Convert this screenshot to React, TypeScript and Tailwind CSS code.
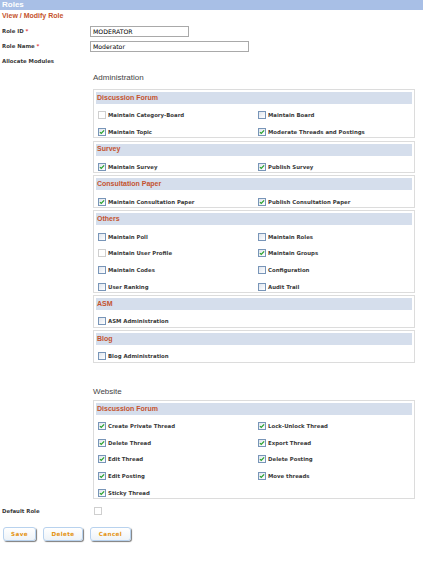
import React from 'react';

type CheckState = 'on' | 'off' | 'dis';

interface Group {
    title: string;
    items: [string, CheckState][];
}

const adminGroups: Group[] = [
    {
        title: 'Discussion Forum',
        items: [
            ['Maintain Category-Board', 'dis'],
            ['Maintain Board', 'off'],
            ['Maintain Topic', 'on'],
            ['Moderate Threads and Postings', 'on'],
        ],
    },
    {
        title: 'Survey',
        items: [
            ['Maintain Survey', 'on'],
            ['Publish Survey', 'on'],
        ],
    },
    {
        title: 'Consultation Paper',
        items: [
            ['Maintain Consultation Paper', 'on'],
            ['Publish Consultation Paper', 'on'],
        ],
    },
    {
        title: 'Others',
        items: [
            ['Maintain Poll', 'off'],
            ['Maintain Roles', 'off'],
            ['Maintain User Profile', 'dis'],
            ['Maintain Groups', 'on'],
            ['Maintain Codes', 'off'],
            ['Configuration', 'off'],
            ['User Ranking', 'off'],
            ['Audit Trail', 'off'],
        ],
    },
    { title: 'ASM', items: [['ASM Administration', 'off']] },
    { title: 'Blog', items: [['Blog Administration', 'off']] },
];

const websiteGroups: Group[] = [
    {
        title: 'Discussion Forum',
        items: [
            ['Create Private Thread', 'on'],
            ['Lock-Unlock Thread', 'on'],
            ['Delete Thread', 'on'],
            ['Export Thread', 'on'],
            ['Edit Thread', 'on'],
            ['Delete Posting', 'on'],
            ['Edit Posting', 'on'],
            ['Move threads', 'on'],
            ['Sticky Thread', 'on'],
        ],
    },
];

function Check({ state }: { state: CheckState }) {
    if (state === 'dis') {
        return <span className="block w-[8px] h-[8px] shrink-0 border border-[#cfcfcf] bg-white" />;
    }
    return (
        <span className="relative block w-[8px] h-[8px] shrink-0 border border-[#7895b8] bg-gradient-to-br from-[#dfe5ee] to-white">
            {state === 'on' && (
                <svg viewBox="0 0 8 8" className="absolute left-0 top-0 w-[6px] h-[6px]">
                    <path d="M1.2 4.2 L3 6 L6.8 1.8" fill="none" stroke="#27a22b" strokeWidth="1.6" />
                </svg>
            )}
        </span>
    );
}

function ModuleBox({ group }: { group: Group }) {
    return (
        <div className="w-[322px] border border-[#dcdcdc] p-[2px] pb-0 mt-[2.2px]">
            <div className="h-[12px] bg-[#d5deec] pl-[1px] flex items-center font-['Liberation_Sans'] font-bold text-[7px] text-[#c4532f]">
                {group.title}
            </div>
            <div className="grid grid-cols-[160px_1fr]">
                {group.items.map(([label, state]) => (
                    <div key={label} className="h-[16.7px] flex items-end pb-[1.5px] pl-[2px]">
                        <Check state={state} />
                        <span className="ml-[2px] font-['DejaVu_Sans'] font-bold text-[5.4px] leading-[8px] text-[#3a3a3a] whitespace-nowrap">
                            {label}
                        </span>
                    </div>
                ))}
            </div>
        </div>
    );
}

function FormRow({ label, required, children }: { label: string; required?: boolean; children: React.ReactNode }) {
    return (
        <div className="flex items-center">
            <div className="w-[90px] shrink-0 pl-[2px] font-['DejaVu_Sans'] font-bold text-[5.4px] text-[#3a3a3a]">
                {label}
                {required && <span className="text-[#e0201c]"> *</span>}
            </div>
            {children}
        </div>
    );
}

function Button({ label, w }: { label: string; w: string }) {
    return (
        <button
            className={`${w} h-[14px] rounded-[3px] border border-[#b8d2ee] bg-gradient-to-b from-white to-[#eef3f8] shadow-[1px_1px_1px_#7d7d7d] font-['DejaVu_Sans'] font-bold text-[5.6px] tracking-[0.4px] text-[#e4920f]`}
        >
            {label}
        </button>
    );
}

export default function App() {
    return (
        <div className="w-[423px] h-[570px] bg-white text-[#3a3a3a]">
            <div className="h-[10px] bg-[#a8bfe6] pl-[2px] font-['Liberation_Sans'] font-bold text-[8px] leading-[10px] text-white">
                Roles
            </div>
            <div className="mt-[2px] h-[8px] pl-[2px] font-['Liberation_Sans'] font-bold text-[7px] leading-[8px] text-[#c5532c]">
                View / Modify Role
            </div>

            <div className="mt-[6px] h-[11px]">
                <FormRow label="Role ID" required>
                    <input
                        readOnly
                        defaultValue="MODERATOR"
                        className="w-[99px] h-[11px] border border-[#a9a9a9] px-[2px] font-['DejaVu_Sans'] text-[6.2px] text-black outline-none"
                    />
                </FormRow>
            </div>
            <div className="mt-[4px] h-[11px]">
                <FormRow label="Role Name" required>
                    <input
                        readOnly
                        defaultValue="Moderator"
                        className="w-[159px] h-[11px] border border-[#a9a9a9] px-[2px] font-['DejaVu_Sans'] text-[6.2px] text-black outline-none"
                    />
                </FormRow>
            </div>
            <div className="mt-[5px] h-[8px] flex items-center">
                <FormRow label="Allocate Modules">{null}</FormRow>
            </div>

            <div className="ml-[93px]">
                <div className="mt-[9px] h-[8px] font-['Liberation_Sans'] text-[8px] leading-[8px] text-[#444]">
                    Administration
                </div>
                <div className="mt-[7px]">
                    {adminGroups.map((g) => (
                        <ModuleBox key={g.title} group={g} />
                    ))}
                </div>

                <div className="mt-[25px] h-[8px] font-['Liberation_Sans'] text-[8px] leading-[8px] text-[#444]">
                    Website
                </div>
                <div className="mt-[4px]">
                    {websiteGroups.map((g) => (
                        <ModuleBox key={g.title} group={g} />
                    ))}
                </div>
            </div>

            <div className="mt-[8px] h-[8px] flex items-center">
                <div className="w-[94px] shrink-0 pl-[2px] font-['DejaVu_Sans'] font-bold text-[5.4px] text-[#3a3a3a]">
                    Default Role
                </div>
                <Check state="dis" />
            </div>

            <div className="mt-[12px] flex gap-[7px] pl-[3px]">
                <Button label="Save" w="w-[33px]" />
                <Button label="Delete" w="w-[40px]" />
                <Button label="Cancel" w="w-[41px]" />
            </div>
        </div>
    );
}
